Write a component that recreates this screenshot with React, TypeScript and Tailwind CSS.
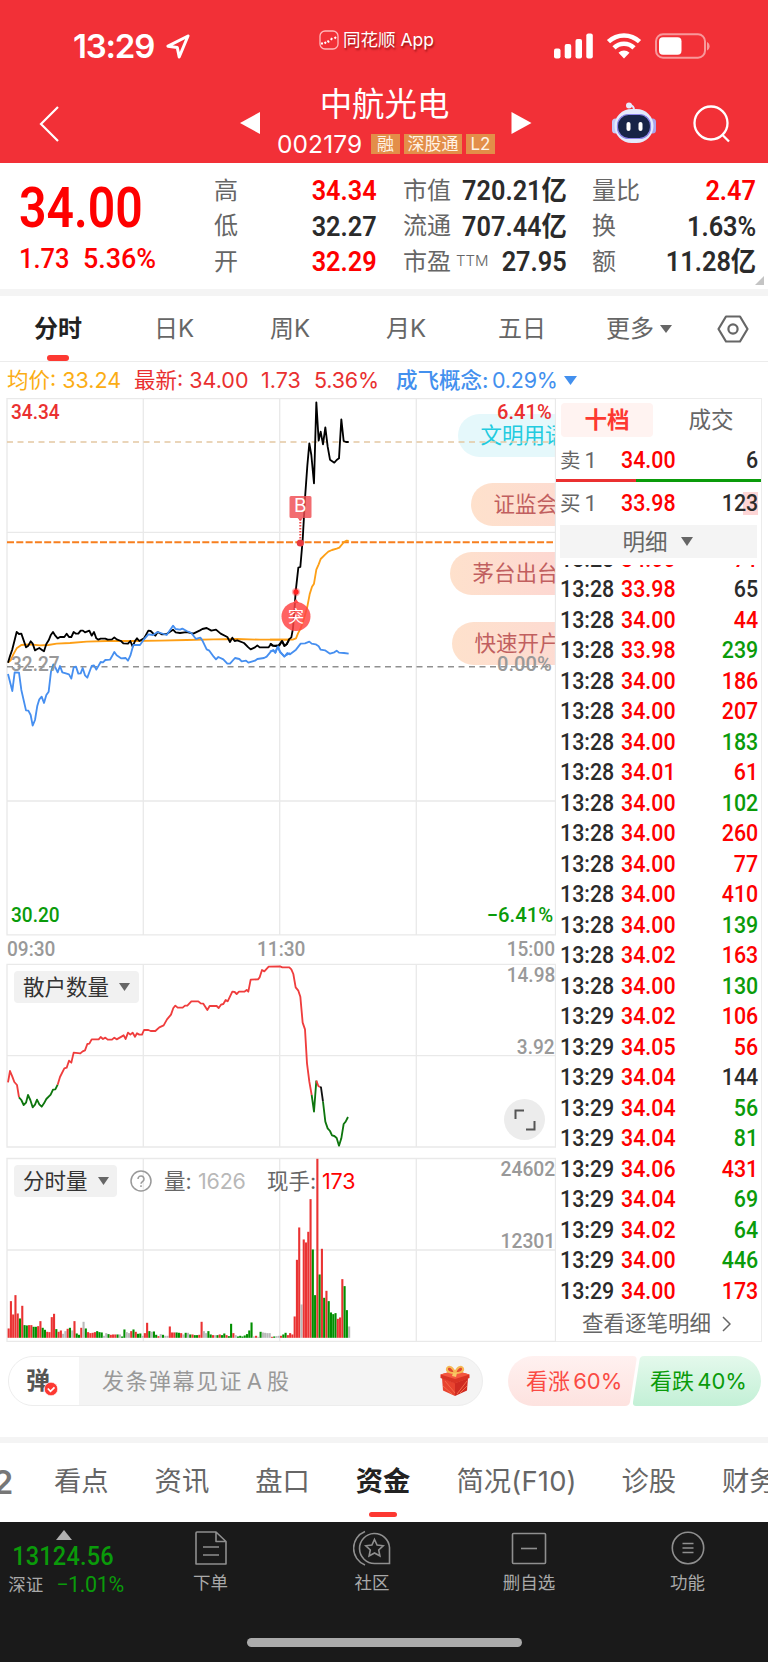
import React from "react";

const CJK = "font-['Inter','Noto_Sans_CJK_SC',sans-serif]";
const DIN = "font-['Roboto','Noto_Sans_CJK_SC',sans-serif]";

function Num({ children, className = "" }: { children: React.ReactNode; className?: string }) {
  return <span className={`${DIN} inline-block whitespace-nowrap ${className}`}>{children}</span>;
}

function Triangle({ className = "", up = false }: { className?: string; up?: boolean }) {
  return (
    <svg viewBox="0 0 12 10" preserveAspectRatio="none" className={className} fill="currentColor">
      <path d={up ? "M6 0 12 10H0Z" : "M0 0H12L6 10Z"} />
    </svg>
  );
}

function StatusBar() {
  return (
    <div className="flex h-[84px] items-center text-white">
      <div className="flex w-[319px] items-center pt-[9px] pl-[73px]">
        <span className="w-[93px] whitespace-nowrap text-[33px] leading-none font-semibold tracking-[-1.2px]">13:29</span>
        <svg viewBox="0 0 24 25" className="h-[25px] w-[24px]" fill="none" stroke="white" strokeWidth="3" strokeLinejoin="round">
          <path d="M22 2 2 12.2 11.3 13.6 13.2 23Z" />
        </svg>
      </div>
      <div className="flex w-[234px] items-center gap-[4px] pb-[4px] text-[17.5px] [text-shadow:1px_2px_2px_rgba(90,0,0,.6)]">
        <svg viewBox="0 0 20 20" className="h-[20px] w-[20px]" fill="none" stroke="#ffb9bb" strokeWidth="1.3">
          <rect x="1" y="1" width="18" height="18" rx="5" />
          <path d="M2 13.500h2M5.500 12l1.500 1.500M8.500 10.500l1.500 2M12 10l1-2M15.500 8.500l1.500-1.500" stroke="white" strokeWidth="2" />
        </svg>
        <span className="whitespace-nowrap">同花顺 App</span>
      </div>
      <svg viewBox="0 0 156 26" className="mt-[7px] ml-[1px] h-[26px] w-[156px]" fill="white">
        <rect x="0" y="15.500" width="6.500" height="10" rx="2" />
        <rect x="10.700" y="11" width="6.500" height="14.500" rx="2" />
        <rect x="21.500" y="6" width="6.500" height="19.500" rx="2" />
        <rect x="32.300" y="0.500" width="6.500" height="25" rx="2" />
        <g fill="none" stroke="white" strokeWidth="4.600">
          <path d="M54.500 8.700a22.500 22.500 0 0 1 31 0" />
          <path d="M60 14.900a14.300 14.300 0 0 1 20 0" />
        </g>
        <path d="M64.500 19.700a8 8 0 0 1 11 0L70 25.500Z" />
        <rect x="102" y="1.300" width="49" height="23.400" rx="7" fill="none" stroke="#f8989b" strokeWidth="2" />
        <rect x="105" y="4.300" width="22.500" height="17.400" rx="4" />
        <path d="M153 9v8.500c3.500-1.500 3.500-7 0-8.500Z" fill="#f8989b" />
      </svg>
    </div>
  );
}

function Robot() {
  return (
    <svg viewBox="0 0 46 42" className="h-[42px] w-[46px]">
      <path d="M23 8c0-3-1-4.500-4-5" fill="none" stroke="#dfe6fb" strokeWidth="2" />
      <circle cx="18" cy="3.500" r="3" fill="#e6ecff" />
      <rect x="1" y="16.500" width="7" height="15" rx="3.500" fill="#c3cbf8" />
      <rect x="38" y="16.500" width="7" height="15" rx="3.500" fill="#a9a4ee" />
      <rect x="3.500" y="7" width="39" height="34" rx="17" fill="#e4eafc" />
      <rect x="6.500" y="12.500" width="33" height="24" rx="11" fill="#172447" stroke="#8d86ea" strokeWidth="1.200" />
      <rect x="15.500" y="20" width="4" height="9" rx="2" fill="white" />
      <rect x="27.500" y="20" width="4" height="9" rx="2" fill="white" />
    </svg>
  );
}

function TitleBar() {
  const badge = "flex h-[20px] items-center justify-center bg-[#e38e49] text-[17px] leading-none text-[#fff3e6]";
  return (
    <div className="flex h-[79px] items-start text-white">
      <svg viewBox="0 0 22 36" className="mt-[22px] ml-[38px] h-[36px] w-[22px]" fill="none" stroke="white" strokeWidth="2.200">
        <path d="M20 1 3 18 20 35" />
      </svg>
      <svg viewBox="0 0 20 22" className="mt-[28px] ml-[180px] h-[22px] w-[20px]" fill="white"><path d="M20 0V22L0 11Z" /></svg>
      <div className="ml-[16px] flex w-[220px] flex-col items-center">
        <div className="mr-[3px] h-[45px] text-[32.400px] leading-[42px]">中航光电</div>
        <div className="flex items-center gap-[4px]">
          <span className="mr-[4px] w-[86px] text-[24.500px] leading-[30px] tracking-[0.100px]">002179</span>
          <span className={`${badge} w-[29px]`}>融</span>
          <span className={`${badge} w-[58px]`}>深股通</span>
          <span className={`${badge} w-[29px]`}>L2</span>
        </div>
      </div>
      <svg viewBox="0 0 20 22" className="mt-[28px] ml-[15px] h-[22px] w-[21px]" fill="white"><path d="M0 0V22L20 11Z" /></svg>
      <div className="mt-[18px] ml-[79px]"><Robot /></div>
      <svg viewBox="0 0 38 38" className="mt-[21px] ml-[36px] h-[38px] w-[38px]" fill="none" stroke="white" strokeWidth="2.300">
        <circle cx="18" cy="18" r="16.500" />
        <path d="m29.500 30 6.500 6.500" />
      </svg>
    </div>
  );
}

type Stat = [string, string, boolean];
const statCols: { box: string; rows: Stat[] }[] = [
  { box: "w-[163px] ml-[214px]", rows: [["高", "34.34", true], ["低", "32.27", false], ["开", "32.29", true]] },
  { box: "w-[164px] ml-[26px]", rows: [["市值", "720.21亿", false], ["流通", "707.44亿", false], ["市盈", "27.95", false]] },
  { box: "w-[164px] ml-[25px]", rows: [["量比", "2.47", true], ["换", "1.63%", false], ["额", "11.28亿", false]] },
];

function Quote() {
  return (
    <div className="relative flex h-[126px] bg-white pt-[10px]">
      <div className="absolute top-[14px] left-[19px] text-[#fe0000]">
        <Num className="h-[62px] origin-left scale-x-[.875] text-[55px] leading-[62px] font-semibold">34.00</Num>
        <div className="flex h-[40px] items-center">
          <Num className="w-[63.500px] origin-left scale-x-[.91] text-[28px] font-medium">1.73</Num>
          <Num className="origin-left scale-x-[.96] text-[28px] font-medium">5.36%</Num>
        </div>
      </div>
      {statCols.map((c) => (
        <div key={c.box} className={c.box}>
          {c.rows.map(([label, value, up]) => (
            <div key={label} className="flex h-[35.500px] items-center justify-between">
              <span className="flex text-[24px] leading-none text-[#666]">
                {label}
                {label === "市盈" && <sup className="top-0 mt-[3px] ml-[5px] text-[15px] leading-none font-light">TTM</sup>}
              </span>
              <Num className={`origin-right scale-x-[.92] text-[27.500px] leading-none font-semibold ${up ? "text-[#fe0000]" : "text-[#2b2b2b]"}`}>{value}</Num>
            </div>
          ))}
        </div>
      ))}
      <svg viewBox="0 0 9 9" className="absolute right-[4px] bottom-[4px] h-[9px] w-[9px]" fill="#c4c4c4"><path d="M9 0V9H0Z" /></svg>
    </div>
  );
}

function PeriodTabs() {
  return (
    <div className="flex h-[66px] items-center border-b-[1.5px] border-[#ececec] pt-[1px] text-[24px] text-[#666]">
      <div className="relative flex h-full w-[116px] items-center justify-center font-bold text-[#222]">
        分时
        <i className="absolute bottom-0 left-[47px] h-[6px] w-[22px] rounded-[3px] bg-[#fd3932]" />
      </div>
      {["日K", "周K", "月K", "五日"].map((t) => (
        <div key={t} className="w-[116px] text-center">{t}</div>
      ))}
      <div className="flex w-[118px] items-center justify-center gap-[6px]">更多<Triangle className="h-[8px] w-[12px]" /></div>
      <svg viewBox="0 0 32 28" className="ml-[19px] h-[28px] w-[32px]" fill="none" stroke="#666" strokeWidth="2.200">
        <path d="M9 1.500H23L30.500 14 23 26.500H9L1.500 14Z" strokeLinejoin="round" />
        <circle cx="16" cy="14" r="4.600" />
      </svg>
    </div>
  );
}

function Legend() {
  return (
    <div className="flex h-[36px] items-center pl-[7px] text-[21.500px] whitespace-nowrap text-[#e93030]">
      <span className="w-[127px] text-[#fbad14]">均价: 33.24</span>
      <span className="w-[127px]">最新: 34.00</span>
      <span className="w-[53px]">1.73</span>
      <span className="w-[82px] tracking-[-0.200px]">5.36%</span>
      <span className="w-[96px] font-medium text-[#4390ee]">成飞概念:</span>
      <span className="tracking-[-0.200px] text-[#4390ee]">0.29%</span>
      <Triangle className="ml-[6px] h-[9px] w-[13px] text-[#4390ee]" />
    </div>
  );
}

const priceLeft =
  "24,803 30,783 37,763 44,735 50,711 57,717 64,716 71,736 78,757 85,752 92,739 98,746 105,766 112,762 118,759 125,764 132,769 139,747 146,736 152,721 159,711 166,722 173,730 180,726 193,726 200,716 207,726 214,726 221,711 228,716 235,716 242,707 249,707 255,712 268,707 275,722 282,711 289,730 295,734 302,731 316,731 323,734 336,733 343,727 350,733 363,738 370,745 384,746 391,738 398,755 405,738 411,730 418,738 432,730 445,707 452,708 466,722 473,711 486,718 500,717 519,704 527,712 540,714 554,712 561,711 580,716 600,706 607,702 620,699 634,707 648,704 662,716 682,726 690,741 697,728 704,738 712,736 732,744 745,757 752,763 765,757 772,751 779,757 806,757 813,747 820,752 838,752 846,738 853,753 860,748 870,730";
const priceRight =
  "0,745 7,752 16,753 26,751 36,738 44,752 50,748 57,733 64,727 69,700 73,650 77,590 85,518 91,516 98,435 105,310 112,212 118,145 124,180 132,265 139,22 146,137 152,110 159,148 166,97 173,155 180,194 193,203 200,195 207,190 214,73 221,138 228,141 236,141";
const avgLeft = "24,803 32,796 40,778 50,760 64,750 90,748 120,751 145,750 170,746 210,744 260,740 320,738 400,738 480,737 560,735 640,733 710,732 780,734 870,734";
const avgRight = "0,734 68,734 78,730 84,715 92,700 99,680 105,660 112,635 119,598 126,575 132,566 139,524 146,508 152,492 166,478 175,470 186,465 200,461 208,458 222,441 230,437 236,438";
const sectorLeft =
  "24,837 37,888 44,832 57,833 64,885 78,946 85,947 92,960 98,992 105,975 112,932 118,913 125,905 132,924 139,900 146,890 153,830 160,808 166,817 173,832 180,813 187,832 200,836 207,838 214,851 221,817 228,815 235,836 242,835 248,819 255,841 262,848 275,813 282,811 289,824 302,801 309,802 316,795 330,794 336,784 343,771 350,781 363,790 377,789 384,797 391,782 400,750 420,750 432,733 445,718 459,720 473,711 500,720 519,692 527,702 540,704 547,701 560,708 574,714 588,732 601,728 607,736 620,763 628,767 641,785 648,793 655,786 670,793 682,806 690,806 705,789 718,792 725,799 738,797 745,803 765,797 772,792 792,789 800,785 813,769 820,767 826,773 833,754 840,771 853,784 870,774";
const sectorRight =
  "0,770 10,765 16,773 24,754 30,770 43,785 52,774 60,778 78,764 92,746 105,745 118,740 125,746 137,748 146,754 152,764 165,766 180,776 193,772 200,767 207,773 222,774 236,776";
const retail: [string, string][] = [
  ["#ef3d3d", "24,547 30,513 37,530 43,546 51,555 57,592"],
  ["#0e760e", "57,592 64,600 71,615 78,608 84,585 91,600 98,622 105,614 111,599 118,613 125,620 132,610 139,597 152,584 159,569 166,568 173,554"],
  ["#ef3d3d", "173,554 180,531 193,505 200,503 207,482 214,488 221,458 241,460 248,454 255,451 262,432 268,431 275,418 296,418 302,411 309,417 316,413 323,419 336,419 343,413 350,418 371,406 377,417 384,398 391,404 398,398 405,410 411,400 418,404 426,404 432,390 445,390 452,393 466,393 478,382 491,376 501,358 513,344 520,324 526,317 533,323 548,323 555,317 562,317 574,304 595,304 602,310 610,311 622,330 629,318 650,318 656,324 663,314 670,312 677,300 683,304 697,275 704,276 710,282 717,275 733,275 740,270 745,275 752,239 774,238 779,232 786,210 793,214 806,200 840,199 847,202 868,202 874,208 880,222 887,262 895,272 901,290 908,368 915,388 921,490 928,545 935,585"],
  ["#0e760e", "935,585 942,635 949,542"],
  ["#ef3d3d", "949,542 955,558 960,561"],
  ["#111", "960,561 963,562 969,605"],
  ["#0e760e", "969,605 976,665 983,685 990,693 996,706 1003,708 1010,714 1017,737 1024,715 1031,672 1037,665 1044,651"],
];

/* One entry per minute: colour initial (r, g, a = grey) followed by bar height. */
const volume =
  "r28 r110 r70 r128 r73 g58 r96 g38 g37 r38 r38 g33 g33 r35 r50 g30 g24 r18 r17 r62 r72 g26 r18 r22 a12 a20 r27 g30 a22 r50 g13 g9 r30 a48 g28 r17 r14 r15 r17 g20 g17 g16 a6 a14 g11 r9 r10 r10 g10 a10 g4 g25 a17 a14 r20 g25 r18 g12 g13 a6 r14 r45 g20 a18 g19 g9 r5 a11 g9 a6 a6 r34 r16 r16 g16 g15 r14 a10 g15 a15 g10 r10 g8 g8 r9 r48 a20 a14 g20 g10 r8 a8 g8 r10 g8 g13 r8 g5 g42 r14 a8 g4 g6 g4 g7 g11 g22 g46 a4 r6 a3 g18 a16 a15 a14 a14 r3 g4 a5 a6 r6 g10 g15 r8 r14 r10 r64 r234 r331 a100 r295 r286 r318 r416 g265 g128 r537 g190 r267 g120 r141 g110 g76 g71 g74 r57 r61 r176 g155 g83 a34"
    .split(" ")
    .map((v) => ({ c: v[0], h: Number(v.slice(1)) }));
const volColor: Record<string, string> = { r: "#ea3333", g: "#008f00", a: "#b9b9b9" };

function Plot() {
  return (
    <svg viewBox="6 398 550 944" className="absolute inset-0 h-[944px] w-[550px]" fill="none">
      <g stroke="#e9e9e9" strokeWidth="1.300">
        <path d="M7 398.600H555.500V934.800H7ZM7 532.400H555M7 801H555M143.300 399V935M279.700 399V935M416.300 399V935" />
        <path d="M7 964.300H555.500V1147H7ZM7 1055.600H555M143.300 964V1147M279.700 964V1147M416.300 964V1147" />
        <path d="M7 1158.500H555.500V1341.300H7ZM7 1250H555M143.300 1158V1341M279.700 1158V1341M416.300 1158V1341" />
      </g>
      <path d="M7 442H553" stroke="#e3c7a2" strokeWidth="1.500" strokeDasharray="6 4.500" />
      <path d="M7 542.300H553" stroke="#f77f1e" strokeWidth="2" strokeDasharray="7 2.300" />
      <path d="M7 666.700H553" stroke="#909090" strokeWidth="1.500" strokeDasharray="6 4.500" />
      <g strokeWidth="5.500" strokeLinejoin="round">
        <g transform="translate(0 395) scale(.33333)">
          <polyline points={avgLeft} stroke="#fd9f16" />
          <polyline points={priceLeft} stroke="#000" />
          <polyline points={sectorLeft} stroke="#468ff0" />
        </g>
        <g transform="translate(270 395) scale(.33333)">
          <polyline points={avgRight} stroke="#fd9f16" />
          <polyline points={priceRight} stroke="#000" />
          <polyline points={sectorRight} stroke="#468ff0" />
        </g>
        <g transform="translate(0 900) scale(.33333)">
          {retail.map(([c, p]) => (
            <polyline key={p} points={p} stroke={c} />
          ))}
        </g>
      </g>
      <g>
        {volume.map((v, i) => (
          <rect key={i} x={7.6 + i * 2.27} y={1337.8 - v.h / 3} width="2.100" height={v.h / 3} fill={volColor[v.c]} />
        ))}
      </g>
      <path d="M300.300 519V540" stroke="#f04848" strokeWidth="2" strokeDasharray="1.500 1.500" />
      <path d="M291 496H310a1.500 1.500 0 0 1 1.500 1.500V516.500a1.500 1.500 0 0 1-1.500 1.500H303l-2.700 3-2.700-3H291a1.500 1.500 0 0 1-1.500-1.500V497.500a1.500 1.500 0 0 1 1.500-1.500Z" fill="#ef4c50" fillOpacity=".82" />
      <circle cx="300.300" cy="543" r="3.600" fill="#e83a40" />
      <circle cx="296" cy="592" r="4.200" fill="#ff2b2b" fillOpacity=".35" />
      <circle cx="296" cy="592" r="2.700" fill="#ff2222" />
      <path d="m293 603 3-4 3 4Z" fill="#ff5050" />
      <circle cx="296" cy="616.500" r="14.500" fill="#ff4444" fillOpacity=".84" />
    </svg>
  );
}

const chips = [
  { t: "文明用语", c: "top-[16px] left-[452px] bg-[#e5f8fb] text-[#22cbdf]" },
  { t: "证监会发布", c: "top-[85px] left-[465px] bg-linear-to-r from-[#fee1cc] to-[#fcd6d6] text-[#c15f5f]" },
  { t: "茅台出台新规", c: "top-[154px] left-[444px] bg-linear-to-r from-[#fee1cc] to-[#fcd0d6] text-[#c15f5f]" },
  { t: "快速开户", c: "top-[224px] left-[446px] bg-linear-to-r from-[#fee1cc] to-[#fcd6d6] text-[#c15f5f]" },
];

function Selector({ children, className }: { children: string; className: string }) {
  return (
    <div className={`flex h-[32px] items-center rounded-[4px] bg-[#f1f1f1] pl-[9px] text-[21.500px] text-[#333] ${className}`}>
      {children}
      <Triangle className="ml-[10px] h-[8px] w-[11px] text-[#666]" />
    </div>
  );
}

function Charts() {
  const label = "absolute text-[20.500px] leading-[24px] font-medium origin-left scale-x-[.93]";
  const labelR = "absolute text-[20.500px] leading-[24px] font-medium origin-right";
  return (
    <div className="relative h-[944px] w-[550px] overflow-hidden">
      {chips.map((c) => (
        <div key={c.t} className={`absolute h-[43px] w-[190px] overflow-hidden rounded-l-full pl-[22.500px] text-[21.500px] leading-[43px] whitespace-nowrap ${c.c}`}>{c.t}</div>
      ))}
      <Plot />
      <span className="absolute top-[94px] left-[288px] text-[19px] leading-[28px] text-white">B</span>
      <span className="absolute top-[205px] left-[282px] text-[16px] leading-[27px] text-white">突</span>
      <Num className={`${label} top-[2px] left-[5px] text-[#ea3030]`}>34.34</Num>
      <Num className={`${labelR} scale-x-[.98] top-[2px] right-[4px] text-[#ea3030]`}>6.41%</Num>
      <Num className={`${label} top-[254px] left-[5px] text-[#999]`}>32.27</Num>
      <Num className={`${labelR} scale-x-[.98] top-[254px] right-[4px] text-[#999]`}>0.00%</Num>
      <Num className={`${label} top-[505px] left-[5px] text-[#0a9b0a]`}>30.20</Num>
      <Num className={`${labelR} scale-x-[.99] top-[505px] right-[3px] text-[#0a9b0a]`}>−6.41%</Num>
      <Num className={`${label} top-[539px] left-[1px] text-[#999]`}>09:30</Num>
      <Num className={`${label} top-[539px] left-[251px] text-[#999]`}>11:30</Num>
      <Num className={`${labelR} scale-x-[.93] top-[539px] right-[1px] text-[#999]`}>15:00</Num>
      <Num className={`${labelR} scale-x-[.93] top-[565px] right-[1px] text-[#999]`}>14.98</Num>
      <Num className={`${labelR} scale-x-[.93] top-[637px] right-[1px] text-[#999]`}>3.92</Num>
      <Num className={`${labelR} scale-x-[.94] top-[759px] right-[1px] text-[#999]`}>24602</Num>
      <Num className={`${labelR} scale-x-[.94] top-[831px] right-[1px] text-[#999]`}>12301</Num>
      <Selector className="absolute top-[573px] left-[8px] w-[125px]">散户数量</Selector>
      <div className="absolute top-[701px] left-[498px] flex h-[41px] w-[41px] items-center justify-center rounded-full bg-[#ececec]">
        <svg viewBox="0 0 22 22" className="h-[22px] w-[22px]" fill="none" stroke="#555" strokeWidth="2"><path d="M1.500 10V1.500H10M20.500 12V20.500H12" /></svg>
      </div>
      <div className="absolute top-[767px] left-[8px] flex items-center text-[21.500px] whitespace-nowrap text-[#666]">
        <Selector className="w-[103px]">分时量</Selector>
        <svg viewBox="0 0 22 22" className="ml-[13px] h-[22px] w-[22px]" fill="none" stroke="#999" strokeWidth="1.500">
          <circle cx="11" cy="11" r="10" />
          <path d="M8 9a3 3 0 1 1 4.700 2.400C11.500 12.200 11 12.700 11 13.800M11 15.300V17" />
        </svg>
        <span className="ml-[12px] w-[34px]">量:</span>
        <span className="w-[69px] text-[21.500px] tracking-[-0.200px] text-[#b8b8b8]">1626</span>
        <span className="w-[55px]">现手:</span>
        <span className="text-[21.500px] tracking-[-0.200px] text-[#fe0000]">173</span>
      </div>
    </div>
  );
}

type Tick = [string, string, string, string];
const R = "text-[#fe0000]";
const G = "text-[#0a9b0a]";
const K = "text-[#2b2b2b]";
const ticks: Tick[] = [
  ["13:28", "34.00", "71", R],
  ["13:28", "33.98", "65", K],
  ["13:28", "34.00", "44", R],
  ["13:28", "33.98", "239", G],
  ["13:28", "34.00", "186", R],
  ["13:28", "34.00", "207", R],
  ["13:28", "34.00", "183", G],
  ["13:28", "34.01", "61", R],
  ["13:28", "34.00", "102", G],
  ["13:28", "34.00", "260", R],
  ["13:28", "34.00", "77", R],
  ["13:28", "34.00", "410", R],
  ["13:28", "34.00", "139", G],
  ["13:28", "34.02", "163", R],
  ["13:28", "34.00", "130", G],
  ["13:29", "34.02", "106", R],
  ["13:29", "34.05", "56", R],
  ["13:29", "34.04", "144", K],
  ["13:29", "34.04", "56", G],
  ["13:29", "34.04", "81", G],
  ["13:29", "34.06", "431", R],
  ["13:29", "34.04", "69", G],
  ["13:29", "34.02", "64", G],
  ["13:29", "34.00", "446", G],
  ["13:29", "34.00", "173", R],
];

function Level({ label, price, qty, className }: { label: string; price: string; qty: string; className: string }) {
  const n = "text-[23px] leading-none font-medium scale-x-[.93]";
  return (
    <div className={`flex items-center pr-[3px] pl-[4px] ${className}`}>
      <span className="w-[61px] text-[20.500px] text-[#666]">{label}<span className="ml-[4px] font-['Roboto',sans-serif] text-[22px]">1</span></span>
      <Num className={`${n} origin-left text-[#fe0000]`}>{price}</Num>
      <Num className={`${n} ml-auto origin-right text-[#2b2b2b] ${qty === "123" ? "bg-linear-to-r from-transparent from-58% via-[#fdd5d5] via-58% to-[#fdd5d5]" : ""}`}>{qty}</Num>
    </div>
  );
}

function OrderBook() {
  const n = "text-[23px] leading-[30.500px] font-medium scale-x-[.93]";
  return (
    <div className="flex h-[944px] w-[206px] flex-col border-[1.5px] border-l-0 border-[#ececec]">
      <div className="flex h-[42px] items-center pl-[5px] text-[22.500px]">
        <span className="flex h-[34px] w-[92px] shrink-0 items-center justify-center rounded-[4px] bg-[#fff3f1] font-bold text-[#fd3932]">十档</span>
        <span className="flex-1 pl-[8px] text-center text-[#666]">成交</span>
      </div>
      <Level className="h-[38px]" label="卖" price="34.00" qty="6" />
      <div className="flex h-[3px]">
        <i className="w-[80px] bg-[#ea3030]" />
        <i className="flex-1 bg-[#0a9b0a]" />
      </div>
      <Level className="h-[42px]" label="买" price="33.98" qty="123" />
      <div className="mt-[1px] mr-[4px] ml-[4px] flex h-[33px] shrink-0 items-center justify-center gap-[13px] bg-[#f4f4f4] pr-[2px] text-[22.500px] text-[#666]">
        明细<Triangle className="h-[9px] w-[12px]" />
      </div>
      <div className="mt-[7px] flex h-[742px] shrink-0 flex-col justify-end overflow-hidden">
        {ticks.map(([time, price, vol, color], i) => (
          <div key={i} className="flex h-[30.500px] shrink-0 items-center pr-[3px] pl-[4px]">
            <Num className={`${n} w-[61px] origin-left text-[#2b2b2b]`}>{time}</Num>
            <Num className={`${n} origin-left text-[#fe0000]`}>{price}</Num>
            <Num className={`${n} ml-auto origin-right ${color}`}>{vol}</Num>
          </div>
        ))}
      </div>
      <div className="flex h-[33px] items-center pl-[26px] text-[21.500px] text-[#666]">
        查看逐笔明细
        <svg viewBox="0 0 9 16" className="ml-[11px] h-[16px] w-[9px]" fill="none" stroke="#666" strokeWidth="1.500"><path d="M1 1 8 8 1 15" /></svg>
      </div>
    </div>
  );
}

function Gift() {
  return (
    <svg viewBox="0 0 30 32" className="h-[32px] w-[30px]">
      <path d="M2 13 15 18V31L3 25.500Z" fill="#e8432f" />
      <path d="M28 13 15 18V31L27 25.500Z" fill="#cf2b22" />
      <path d="m5 16 10 12M3 21l9 8M27 16 17 29M27 21l-7 7" stroke="#f36b4a" strokeWidth="1" />
      <path d="M.5 9.500 15 5.500 29.500 9.500V13L15 18.500.5 13Z" fill="#d93425" />
      <path d="M.5 9.500 15 5.500 29.500 9.500 15 14Z" fill="#f4573f" />
      <path d="M15 8C11 8 6 7 7 3.500 8.500 0 13 2 15 8ZM15 8c4 0 9-1 8-4.500C21.500 0 17 2 15 8Z" fill="#e2492f" stroke="#f6b955" strokeWidth="2" />
      <path d="m13 8 4 0-1 4-4-1Z" fill="#f8c765" />
    </svg>
  );
}

function CommentBar() {
  return (
    <div className="flex h-[95px] items-start pt-[14px] pl-[8px]">
      <div className="flex h-[50px] w-[475px] items-center overflow-hidden rounded-full border-[1.5px] border-[#ededed] bg-[#f4f4f4] text-[#999]">
        <div className="flex h-full w-[70px] items-center bg-white pl-[17px]">
          <div className="relative text-[24px] leading-[32px] font-bold text-[#555]">
            弹
            <svg viewBox="0 0 14 14" className="absolute top-[17px] left-[18px] h-[14px] w-[14px]">
              <circle cx="7" cy="7" r="6.700" fill="#fd3932" stroke="white" strokeWidth=".6" />
              <path d="m3.800 6.500 2.700 2.800 4-4" fill="none" stroke="white" strokeWidth="1.800" />
            </svg>
          </div>
        </div>
        <span className="w-[334px] pl-[23px] text-[22px] tracking-[1.500px] [word-spacing:-4px]">发条弹幕见证 A 股</span>
        <div className="ml-[27px]"><Gift /></div>
      </div>
      <div className="relative ml-[25px] flex h-[50px] w-[253px] text-[22px] whitespace-nowrap [word-spacing:-3px]">
        <svg viewBox="0 0 253 50" className="absolute inset-0 h-[50px] w-[253px]">
          <defs>
            <linearGradient id="up" x2="0" y2="1"><stop stopColor="#fff1f0" /><stop offset="1" stopColor="#fde2df" /></linearGradient>
            <linearGradient id="down" x2="0" y2="1"><stop stopColor="#e4f9ec" /><stop offset="1" stopColor="#c3f0d6" /></linearGradient>
          </defs>
          <path d="M25 0H125Q129 0 128.500 4L122 46Q121 50 117 50H25A25 25 0 0 1 25 0Z" fill="url(#up)" />
          <path d="M228 0H136Q132 0 131.500 4L125 46Q124.500 50 128 50H228A25 25 0 0 0 228 0Z" fill="url(#down)" />
        </svg>
        <span className="relative w-[124px] pl-[18px] leading-[50px] text-[#fa4a43]">看涨 60%</span>
        <span className="relative pl-[18px] leading-[50px] text-[#0a9b0a]">看跌 40%</span>
      </div>
    </div>
  );
}

function SectionTabs() {
  return (
    <div className="flex h-[79px] items-center gap-[46px] overflow-hidden text-[27.300px] whitespace-nowrap text-[#666]">
      <span className="-ml-[26px] w-[35px] text-right text-[33px] font-semibold text-[#777]">L2</span>
      <span className="-ml-[1px]">看点</span>
      <span>资讯</span>
      <span>盘口</span>
      <span className="relative flex h-full items-center font-bold text-[#222]">
        资金
        <i className="absolute bottom-[5px] left-[13px] h-[5px] w-[28px] rounded-full bg-[#fd3932]" />
      </span>
      <span className="w-[119px] tracking-[0.200px]">简况(F10)</span>
      <span>诊股</span>
      <span>财务</span>
    </div>
  );
}

function BottomNav() {
  const ico = { fill: "none", stroke: "#8f8f8f", strokeWidth: 1.6 };
  const item = "flex shrink-0 flex-col items-center pt-[8px] gap-[4px]";
  return (
    <div className="flex h-[141px] flex-col border-b border-[#777] bg-[#1a1a1a] text-[17.500px] leading-[26px] text-[#a9a9a9]">
      <div className="flex h-[116px]">
        <div className="flex w-[130px] shrink-0 flex-col items-center pt-[8px] pr-[3px]">
          <Triangle up className="h-[10px] w-[16px] text-[#b0b0b0]" />
          <Num className="mt-[2px] origin-center scale-x-[.94] text-[25px] leading-[30px] font-medium tracking-[0.200px] text-[#0a9b0a]">13124.56</Num>
          <div className="ml-[5px] flex items-center gap-[13px]">深证<Num className="text-[21.500px] leading-[26px] tracking-[-0.400px] text-[#0a9b0a]">−1.01%</Num></div>
        </div>
        <div className={`${item} w-[161px]`}>
          <svg viewBox="0 0 34 36" className="h-[36px] w-[34px]" {...ico}>
            <path d="M3 2H22L32 11.500V34H2V3Q2 2 3 2ZM22 2V11.500H32M9 17H25M9 25H25" strokeLinejoin="round" />
          </svg>
          下单
        </div>
        <div className={`${item} w-[162px]`}>
          <svg viewBox="0 0 38 36" className="h-[36px] w-[38px]" {...ico}>
            <path d="M36.500 33.500V17.500A15 15 0 1 0 21.500 33.500ZM12 1.500A18 18 0 0 0 12 35" />
            <path d="m21.500 9.500 2.600 5.600 6.100.7-4.500 4.200 1.200 6-5.400-3-5.400 3 1.200-6-4.500-4.200 6.100-.7Z" />
          </svg>
          社区
        </div>
        <div className={`${item} w-[152px]`}>
          <svg viewBox="0 0 36 36" className="h-[36px] w-[36px]" {...ico}><rect x="1.500" y="3.500" width="33" height="30" rx="1" /><path d="M10 18.500H26" /></svg>
          删自选
        </div>
        <div className={`${item} w-[165px]`}>
          <svg viewBox="0 0 36 36" className="h-[36px] w-[36px]" {...ico}><circle cx="18" cy="18" r="15.700" /><path d="M12.500 13.500H23.500M12.500 18H23.500M12.500 22.500H23.500" /></svg>
          功能
        </div>
      </div>
      <i className="ml-[247px] h-[9px] w-[275px] rounded-full bg-[#ababab]" />
    </div>
  );
}

export default function App() {
  return (
    <div className={`h-[1662px] w-[768px] overflow-hidden bg-white ${CJK}`}>
      <header className="h-[163px] bg-[#f23037]">
        <StatusBar />
        <TitleBar />
      </header>
      <Quote />
      <div className="h-[7px] bg-[#f4f4f4]" />
      <PeriodTabs />
      <Legend />
      <main className="flex pl-[6px]">
        <Charts />
        <OrderBook />
      </main>
      <CommentBar />
      <div className="h-[6px] bg-[#f4f4f4]" />
      <SectionTabs />
      <BottomNav />
    </div>
  );
}
